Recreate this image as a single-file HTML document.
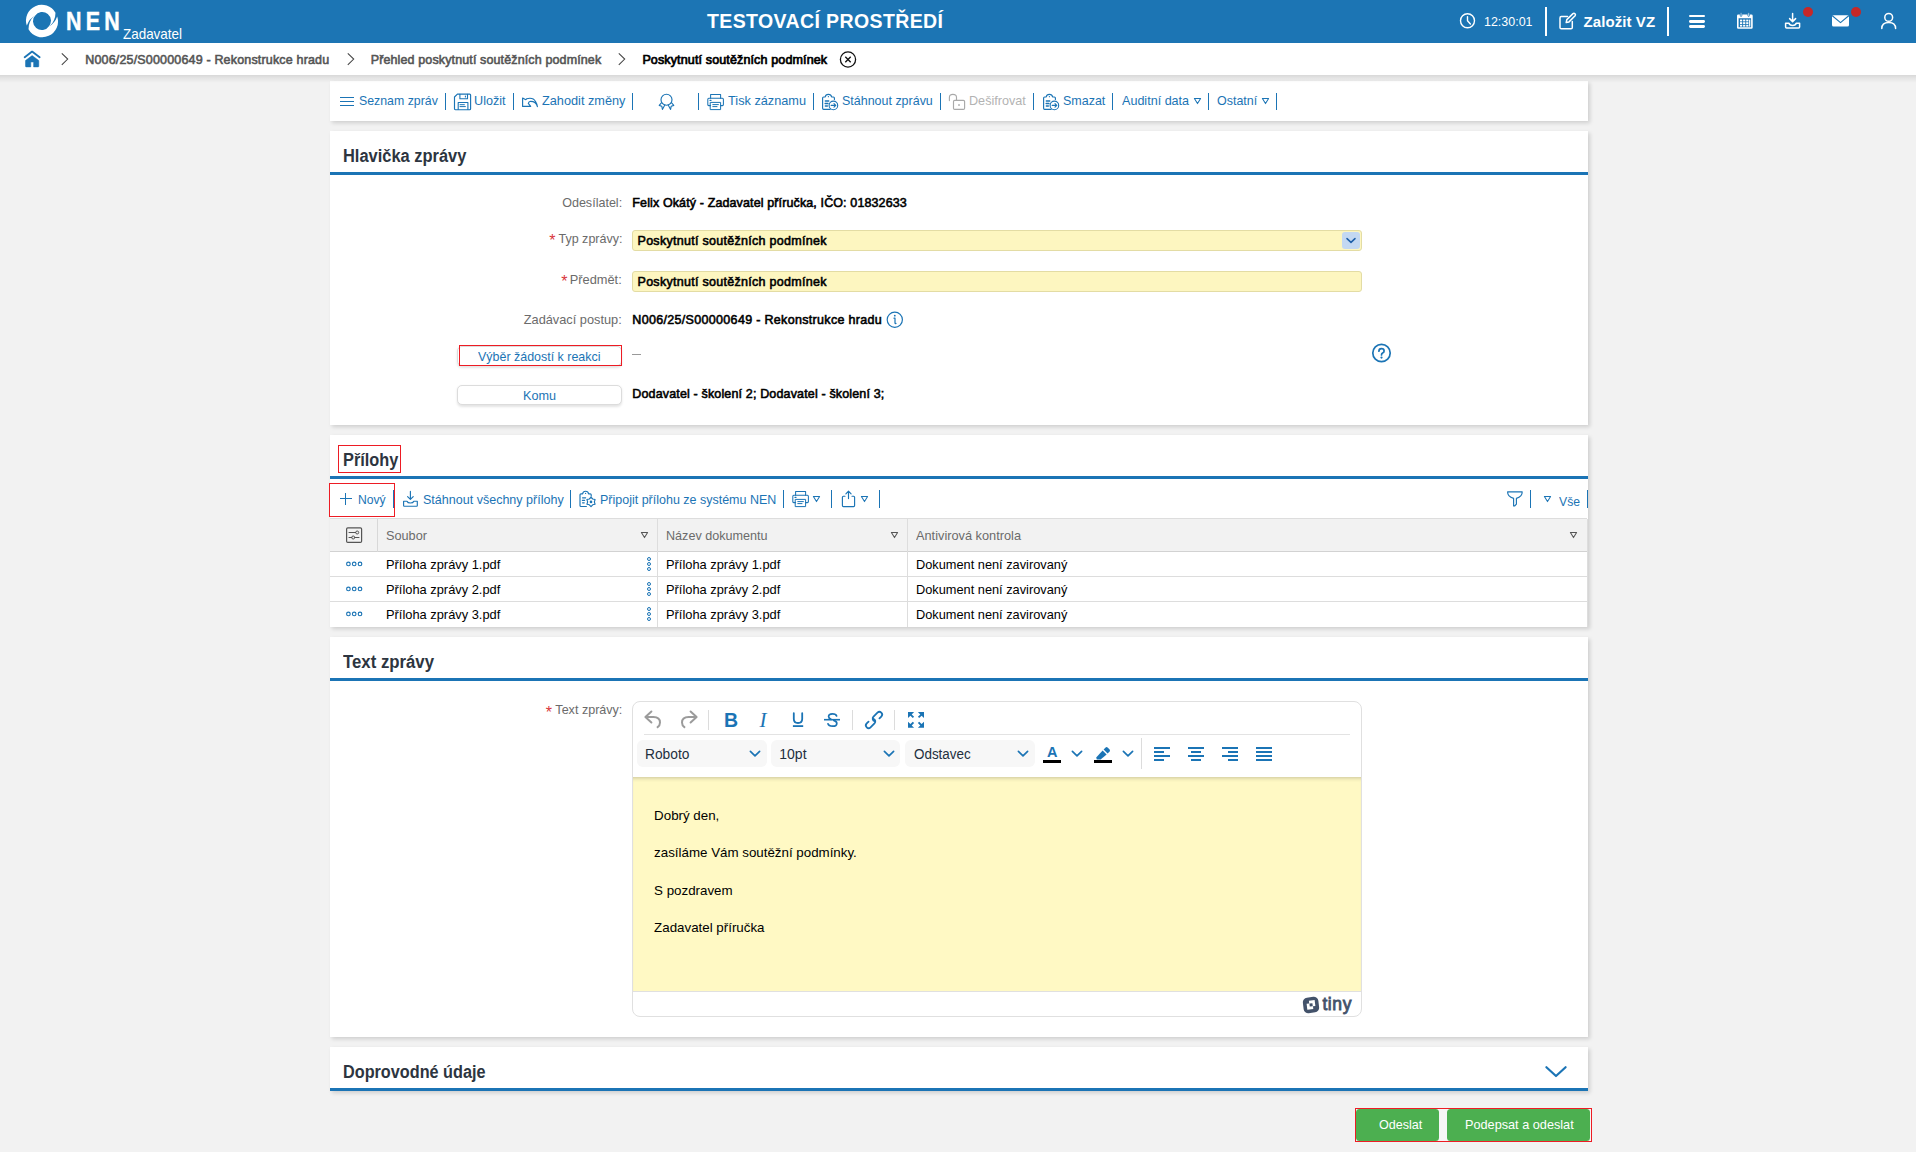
<!DOCTYPE html>
<html lang="cs"><head><meta charset="utf-8"><title>NEN - Poskytnutí soutěžních podmínek</title>
<style>
html,body{margin:0;padding:0}
body{width:1916px;height:1152px;overflow:hidden;background:#f2f2f2;position:relative;font-family:"Liberation Sans",sans-serif;}
.a{position:absolute;box-sizing:border-box}
.t{position:absolute;white-space:nowrap;display:block}
.panel{background:#fff;box-shadow:1.5px 1.5px 4px rgba(0,0,0,.15)}
</style></head><body>
<div class="a" style="left:0px;top:0px;width:1916px;height:43px;background:#1c75b4"></div>
<span class="t" style="left:65.8px;top:6.4px;height:30px;line-height:30px;font-size:25.5px;font-weight:700;color:#fff;letter-spacing:4.985px;transform:scaleX(.84);transform-origin:0 50%;-webkit-text-stroke:.45px #fff;">NEN</span>
<span class="t" style="left:123.0px;top:23.8px;height:20px;line-height:20px;font-size:14.5px;font-weight:400;color:#fff;transform:scaleX(0.9265);transform-origin:0 50%;">Zadavatel</span>
<span class="t" style="left:707.0px;top:8.8px;height:25px;line-height:25px;font-size:19.5px;font-weight:700;color:#fff;letter-spacing:0.390px;">TESTOVACÍ PROSTŘEDÍ</span>
<span class="t" style="left:1484.0px;top:12.0px;height:19px;line-height:19px;font-size:13px;font-weight:400;color:#fff;transform:scaleX(0.9584);transform-origin:0 50%;">12:30:01</span>
<div class="a" style="left:1545px;top:7px;width:2px;height:29px;background:#fff"></div>
<span class="t" style="left:1583.6px;top:11.0px;height:21px;line-height:21px;font-size:15px;font-weight:700;color:#fff;letter-spacing:0.074px;">Založit VZ</span>
<div class="a" style="left:1667px;top:7px;width:2px;height:29px;background:#fff"></div>
<div class="a" style="left:0px;top:43px;width:1916px;height:32px;background:#fff"></div>
<span class="t" style="left:85.2px;top:51.2px;height:18px;line-height:18px;font-size:12.5px;font-weight:400;color:#555;letter-spacing:0.171px;-webkit-text-stroke:0.57px #555;">N006/25/S00000649 - Rekonstrukce hradu</span>
<span class="t" style="left:370.7px;top:51.2px;height:18px;line-height:18px;font-size:12.5px;font-weight:400;color:#555;letter-spacing:0.126px;-webkit-text-stroke:0.57px #555;">Přehled poskytnutí soutěžních podmínek</span>
<span class="t" style="left:642.4px;top:51.2px;height:18px;line-height:18px;font-size:12.5px;font-weight:400;color:#000;letter-spacing:0.139px;-webkit-text-stroke:0.73px #000;">Poskytnutí soutěžních podmínek</span>
<div class="a panel" style="left:330px;top:81px;width:1258px;height:40px;"></div>
<span class="t" style="left:359.0px;top:90.8px;height:19px;line-height:19px;font-size:13px;font-weight:400;color:#1b74b5;transform:scaleX(0.9484);transform-origin:0 50%;">Seznam zpráv</span>
<div class="a" style="left:445px;top:93px;width:1.4px;height:17px;background:#1b74b5"></div>
<span class="t" style="left:474.4px;top:90.8px;height:19px;line-height:19px;font-size:13px;font-weight:400;color:#1b74b5;transform:scaleX(0.9721);transform-origin:0 50%;">Uložit</span>
<div class="a" style="left:513px;top:93px;width:1.4px;height:17px;background:#1b74b5"></div>
<span class="t" style="left:541.8px;top:90.8px;height:19px;line-height:19px;font-size:13px;font-weight:400;color:#1b74b5;transform:scaleX(0.9782);transform-origin:0 50%;">Zahodit změny</span>
<div class="a" style="left:632px;top:93px;width:1.4px;height:17px;background:#1b74b5"></div>
<div class="a" style="left:698px;top:93px;width:1.4px;height:17px;background:#1b74b5"></div>
<span class="t" style="left:727.9px;top:90.8px;height:19px;line-height:19px;font-size:13px;font-weight:400;color:#1b74b5;transform:scaleX(0.9786);transform-origin:0 50%;">Tisk záznamu</span>
<div class="a" style="left:813px;top:93px;width:1.4px;height:17px;background:#1b74b5"></div>
<span class="t" style="left:842.0px;top:90.8px;height:19px;line-height:19px;font-size:13px;font-weight:400;color:#1b74b5;transform:scaleX(0.9591);transform-origin:0 50%;">Stáhnout zprávu</span>
<div class="a" style="left:940px;top:93px;width:1.4px;height:17px;background:#1b74b5"></div>
<span class="t" style="left:969.4px;top:90.8px;height:19px;line-height:19px;font-size:13px;font-weight:400;color:#b3b3b3;transform:scaleX(0.9706);transform-origin:0 50%;">Dešifrovat</span>
<div class="a" style="left:1033px;top:93px;width:1.4px;height:17px;background:#1b74b5"></div>
<span class="t" style="left:1062.7px;top:90.8px;height:19px;line-height:19px;font-size:13px;font-weight:400;color:#1b74b5;transform:scaleX(0.9598);transform-origin:0 50%;">Smazat</span>
<div class="a" style="left:1112px;top:93px;width:1.4px;height:17px;background:#1b74b5"></div>
<span class="t" style="left:1121.9px;top:90.8px;height:19px;line-height:19px;font-size:13px;font-weight:400;color:#1b74b5;transform:scaleX(0.9670);transform-origin:0 50%;">Auditní data</span>
<div class="a" style="left:1208px;top:93px;width:1.4px;height:17px;background:#1b74b5"></div>
<span class="t" style="left:1217.4px;top:90.8px;height:19px;line-height:19px;font-size:13px;font-weight:400;color:#1b74b5;transform:scaleX(0.9593);transform-origin:0 50%;">Ostatní</span>
<div class="a" style="left:1276px;top:93px;width:1.4px;height:17px;background:#1b74b5"></div>
<div class="a panel" style="left:330px;top:131px;width:1258px;height:294px;"></div>
<div class="a" style="left:330px;top:172px;width:1258px;height:3px;background:#1b74b5"></div>
<span class="t" style="left:342.5px;top:144.0px;height:24px;line-height:24px;font-size:18px;font-weight:700;color:#2d3540;transform:scaleX(0.9135);transform-origin:0 50%;">Hlavička zprávy</span>
<span class="t" style="right:1294.0px;top:193.0px;height:19px;line-height:19px;font-size:13px;font-weight:400;color:#6b6b6b;transform:scaleX(0.9655);transform-origin:100% 50%;">Odesílatel:</span>
<span class="t" style="left:632.3px;top:193.9px;height:18px;line-height:18px;font-size:12.5px;font-weight:400;color:#000;letter-spacing:0.122px;-webkit-text-stroke:0.57px #000;">Felix Okátý - Zadavatel příručka, IČO: 01832633</span>
<span class="t" style="right:1294.0px;top:228.5px;height:19px;line-height:19px;font-size:13px;font-weight:400;color:#6b6b6b;transform:scaleX(0.9629);transform-origin:100% 50%;">Typ zprávy:</span>
<span class="t" style="left:549.3px;top:230.2px;height:22px;line-height:22px;font-size:16px;font-weight:400;color:#d9363b;">*</span>
<div class="a" style="left:632px;top:230px;width:730px;height:21px;background:#fdf6c0;border:1px solid #e3dca4;border-radius:3px"></div>
<span class="t" style="left:637.5px;top:231.9px;height:18px;line-height:18px;font-size:12.5px;font-weight:400;color:#000;letter-spacing:0.288px;-webkit-text-stroke:0.57px #000;">Poskytnutí soutěžních podmínek</span>
<div class="a" style="left:1342px;top:232px;width:18px;height:17px;background:#c3d8f2;border-radius:3px"></div>
<div class="a" style="left:632px;top:271px;width:730px;height:21px;background:#fdf6c0;border:1px solid #e3dca4;border-radius:3px"></div>
<span class="t" style="right:1294.0px;top:269.5px;height:19px;line-height:19px;font-size:13px;font-weight:400;color:#6b6b6b;transform:scaleX(0.9859);transform-origin:100% 50%;">Předmět:</span>
<span class="t" style="left:561.3px;top:271.2px;height:22px;line-height:22px;font-size:16px;font-weight:400;color:#d9363b;">*</span>
<span class="t" style="left:637.5px;top:272.9px;height:18px;line-height:18px;font-size:12.5px;font-weight:400;color:#000;letter-spacing:0.288px;-webkit-text-stroke:0.57px #000;">Poskytnutí soutěžních podmínek</span>
<span class="t" style="right:1294.0px;top:309.5px;height:19px;line-height:19px;font-size:13px;font-weight:400;color:#6b6b6b;transform:scaleX(0.9827);transform-origin:100% 50%;">Zadávací postup:</span>
<span class="t" style="left:632.3px;top:311.2px;height:18px;line-height:18px;font-size:12.5px;font-weight:400;color:#000;letter-spacing:0.320px;-webkit-text-stroke:0.57px #000;">N006/25/S00000649 - Rekonstrukce hradu</span>
<div class="a" style="left:457.3px;top:346px;width:164.4px;height:19.6px;border:1px solid #dcdcdc;border-radius:5px;background:#fff;box-shadow:0 1.5px 2.5px rgba(0,0,0,.11)"></div>
<div class="a" style="left:459px;top:345px;width:163px;height:21px;border:1.2px solid #ed1c24"></div>
<span class="t" style="left:478.3px;top:347.0px;height:19px;line-height:19px;font-size:13px;font-weight:400;color:#1b74b5;transform:scaleX(0.9579);transform-origin:0 50%;">Výběr žádostí k reakci</span>
<div class="a" style="left:632px;top:354px;width:9px;height:1px;background:#999"></div>
<div class="a" style="left:457.3px;top:385.2px;width:164.4px;height:19.6px;border:1px solid #dcdcdc;border-radius:5px;background:#fff;box-shadow:0 1.5px 2.5px rgba(0,0,0,.11)"></div>
<span class="t" style="left:523.0px;top:386.0px;height:19px;line-height:19px;font-size:13px;font-weight:400;color:#1b74b5;transform:scaleX(0.9717);transform-origin:0 50%;">Komu</span>
<span class="t" style="left:632.3px;top:384.8px;height:18px;line-height:18px;font-size:12.5px;font-weight:400;color:#000;letter-spacing:0.153px;-webkit-text-stroke:0.57px #000;">Dodavatel - školení 2; Dodavatel - školení 3;</span>
<div class="a panel" style="left:330px;top:435px;width:1258px;height:191.6px;"></div>
<div class="a" style="left:330px;top:476px;width:1258px;height:3px;background:#1b74b5"></div>
<span class="t" style="left:342.5px;top:448.0px;height:24px;line-height:24px;font-size:18px;font-weight:700;color:#2d3540;transform:scaleX(0.9064);transform-origin:0 50%;">Přílohy</span>
<div class="a" style="left:337.5px;top:445px;width:63.5px;height:28px;border:1.2px solid #ed1c24"></div>
<div class="a" style="left:329px;top:483.4px;width:65.8px;height:33.6px;border:1.2px solid #ed1c24"></div>
<span class="t" style="left:358.4px;top:490.0px;height:19px;line-height:19px;font-size:13px;font-weight:400;color:#1b74b5;transform:scaleX(0.9352);transform-origin:0 50%;">Nový</span>
<div class="a" style="left:393px;top:490px;width:1.4px;height:17.8px;background:#1b74b5"></div>
<span class="t" style="left:422.5px;top:490.0px;height:19px;line-height:19px;font-size:13px;font-weight:400;color:#1b74b5;transform:scaleX(0.9638);transform-origin:0 50%;">Stáhnout všechny přílohy</span>
<div class="a" style="left:570px;top:490px;width:1.4px;height:17.8px;background:#1b74b5"></div>
<span class="t" style="left:599.6px;top:490.0px;height:19px;line-height:19px;font-size:13px;font-weight:400;color:#1b74b5;transform:scaleX(0.9607);transform-origin:0 50%;">Připojit přílohu ze systému NEN</span>
<div class="a" style="left:783px;top:490px;width:1.4px;height:17.8px;background:#1b74b5"></div>
<div class="a" style="left:831px;top:490px;width:1.4px;height:17.8px;background:#1b74b5"></div>
<div class="a" style="left:879px;top:490px;width:1.4px;height:17.8px;background:#1b74b5"></div>
<div class="a" style="left:1530px;top:490px;width:1.4px;height:17.8px;background:#1b74b5"></div>
<span class="t" style="left:1558.9px;top:491.5px;height:19px;line-height:19px;font-size:13px;font-weight:400;color:#1b74b5;transform:scaleX(0.9375);transform-origin:0 50%;">Vše</span>
<div class="a" style="left:1587px;top:490px;width:1.4px;height:17.8px;background:#1b74b5"></div>
<div class="a" style="left:330px;top:518px;width:1257px;height:34px;background:#f2f2f2;border-top:1px solid #ddd;border-bottom:1px solid #d2d2d2"></div>
<div class="a" style="left:377px;top:519px;width:1px;height:33px;background:#d8d8d8"></div>
<div class="a" style="left:657px;top:519px;width:1px;height:107.5px;background:#ddd"></div>
<div class="a" style="left:907px;top:519px;width:1px;height:107.5px;background:#ddd"></div>
<span class="t" style="left:386.1px;top:526.0px;height:19px;line-height:19px;font-size:13px;font-weight:400;color:#6b6b6b;transform:scaleX(0.9780);transform-origin:0 50%;">Soubor</span>
<span class="t" style="left:666.4px;top:526.0px;height:19px;line-height:19px;font-size:13px;font-weight:400;color:#6b6b6b;transform:scaleX(0.9687);transform-origin:0 50%;">Název dokumentu</span>
<span class="t" style="left:916.2px;top:526.0px;height:19px;line-height:19px;font-size:13px;font-weight:400;color:#6b6b6b;transform:scaleX(0.9819);transform-origin:0 50%;">Antivirová kontrola</span>
<span class="t" style="left:386.1px;top:555.0px;height:19px;line-height:19px;font-size:13px;font-weight:400;color:#000;transform:scaleX(0.9886);transform-origin:0 50%;">Příloha zprávy 1.pdf</span>
<span class="t" style="left:666.4px;top:555.0px;height:19px;line-height:19px;font-size:13px;font-weight:400;color:#000;transform:scaleX(0.9886);transform-origin:0 50%;">Příloha zprávy 1.pdf</span>
<span class="t" style="left:916.2px;top:555.0px;height:19px;line-height:19px;font-size:13px;font-weight:400;color:#000;transform:scaleX(0.9830);transform-origin:0 50%;">Dokument není zavirovaný</span>
<div class="a" style="left:330px;top:576px;width:1257px;height:1px;background:#ddd"></div>
<span class="t" style="left:386.1px;top:580.0px;height:19px;line-height:19px;font-size:13px;font-weight:400;color:#000;transform:scaleX(0.9886);transform-origin:0 50%;">Příloha zprávy 2.pdf</span>
<span class="t" style="left:666.4px;top:580.0px;height:19px;line-height:19px;font-size:13px;font-weight:400;color:#000;transform:scaleX(0.9886);transform-origin:0 50%;">Příloha zprávy 2.pdf</span>
<span class="t" style="left:916.2px;top:580.0px;height:19px;line-height:19px;font-size:13px;font-weight:400;color:#000;transform:scaleX(0.9830);transform-origin:0 50%;">Dokument není zavirovaný</span>
<div class="a" style="left:330px;top:601px;width:1257px;height:1px;background:#ddd"></div>
<span class="t" style="left:386.1px;top:605.0px;height:19px;line-height:19px;font-size:13px;font-weight:400;color:#000;transform:scaleX(0.9886);transform-origin:0 50%;">Příloha zprávy 3.pdf</span>
<span class="t" style="left:666.4px;top:605.0px;height:19px;line-height:19px;font-size:13px;font-weight:400;color:#000;transform:scaleX(0.9886);transform-origin:0 50%;">Příloha zprávy 3.pdf</span>
<span class="t" style="left:916.2px;top:605.0px;height:19px;line-height:19px;font-size:13px;font-weight:400;color:#000;transform:scaleX(0.9830);transform-origin:0 50%;">Dokument není zavirovaný</span>
<div class="a" style="left:1586.5px;top:519px;width:1px;height:107.5px;background:#ddd"></div>
<div class="a panel" style="left:330px;top:637px;width:1258px;height:400px;"></div>
<div class="a" style="left:330px;top:678px;width:1258px;height:3px;background:#1b74b5"></div>
<span class="t" style="left:342.5px;top:650.0px;height:24px;line-height:24px;font-size:18px;font-weight:700;color:#2d3540;transform:scaleX(0.9313);transform-origin:0 50%;">Text zprávy</span>
<span class="t" style="right:1294.0px;top:700.0px;height:19px;line-height:19px;font-size:13px;font-weight:400;color:#6b6b6b;transform:scaleX(0.9660);transform-origin:100% 50%;">Text zprávy:</span>
<span class="t" style="left:545.8px;top:701.7px;height:22px;line-height:22px;font-size:16px;font-weight:400;color:#d9363b;">*</span>
<div class="a" style="left:632px;top:701px;width:730px;height:315.5px;border:1px solid #e0e0e0;border-radius:8px;background:#fff;overflow:hidden"><div class="a" style="left:0;top:75px;width:728px;height:213.6px;background:#fff9c4;box-shadow:inset 0 4px 4px -3px rgba(0,0,0,.22)"></div><div class="a" style="left:0;top:288.6px;width:728px;height:1px;background:#e0e0e0"></div></div>
<div class="a" style="left:644px;top:734px;width:706px;height:1px;background:#e3e3e3"></div>
<div class="a" style="left:707.8px;top:710px;width:1px;height:19.6px;background:#dcdcdc"></div>
<div class="a" style="left:851.8px;top:710px;width:1px;height:19.6px;background:#dcdcdc"></div>
<div class="a" style="left:893.8px;top:710px;width:1px;height:19.6px;background:#dcdcdc"></div>
<div class="a" style="left:637.3px;top:740px;width:129.5px;height:26.5px;background:#f7f7f7;border-radius:6px"></div>
<span class="t" style="left:644.9px;top:744.0px;height:20px;line-height:20px;font-size:14px;font-weight:400;color:#222f3e;transform:scaleX(0.9835);transform-origin:0 50%;">Roboto</span>
<div class="a" style="left:770.9px;top:740px;width:129.5px;height:26.5px;background:#f7f7f7;border-radius:6px"></div>
<span class="t" style="left:779.2px;top:744.0px;height:20px;line-height:20px;font-size:14px;font-weight:400;color:#222f3e;letter-spacing:0.051px;">10pt</span>
<div class="a" style="left:905.2px;top:740px;width:129.5px;height:26.5px;background:#f7f7f7;border-radius:6px"></div>
<span class="t" style="left:913.5px;top:744.0px;height:20px;line-height:20px;font-size:14px;font-weight:400;color:#222f3e;transform:scaleX(0.9588);transform-origin:0 50%;">Odstavec</span>
<div class="a" style="left:1140.5px;top:738px;width:1px;height:31px;background:#dcdcdc"></div>
<span class="t" style="left:654.1px;top:805.8px;height:19px;line-height:19px;font-size:13.33px;font-weight:400;color:#000;">Dobrý den,</span>
<span class="t" style="left:654.1px;top:843.3px;height:19px;line-height:19px;font-size:13.33px;font-weight:400;color:#000;">zasíláme Vám soutěžní podmínky.</span>
<span class="t" style="left:654.1px;top:880.8px;height:19px;line-height:19px;font-size:13.33px;font-weight:400;color:#000;">S pozdravem</span>
<span class="t" style="left:654.1px;top:917.8px;height:19px;line-height:19px;font-size:13.33px;font-weight:400;color:#000;">Zadavatel příručka</span>
<span class="t" style="left:1322.4px;top:993.0px;height:23px;line-height:23px;font-size:17.5px;font-weight:400;color:#43526a;letter-spacing:0.589px;-webkit-text-stroke:0.80px #43526a;">tiny</span>
<div class="a panel" style="left:330px;top:1047px;width:1258px;height:44px;"></div>
<div class="a" style="left:330px;top:1088px;width:1258px;height:3px;background:#1b74b5"></div>
<span class="t" style="left:342.5px;top:1060.0px;height:24px;line-height:24px;font-size:18px;font-weight:700;color:#2d3540;transform:scaleX(0.9018);transform-origin:0 50%;">Doprovodné údaje</span>
<div class="a" style="left:1355px;top:1108px;width:236.6px;height:34px;border:1.2px solid #ed1c24;background:#f6f6f6"></div>
<div class="a" style="left:1356.2px;top:1109.1px;width:82.5px;height:31.6px;background:#4caf50;border-radius:3.5px"></div>
<div class="a" style="left:1447.1px;top:1109.1px;width:143.2px;height:31.6px;background:#4caf50;border-radius:3.5px"></div>
<span class="t" style="left:1379.4px;top:1115.0px;height:19px;line-height:19px;font-size:13px;font-weight:400;color:#fff;transform:scaleX(0.9665);transform-origin:0 50%;">Odeslat</span>
<span class="t" style="left:1464.6px;top:1115.0px;height:19px;line-height:19px;font-size:13px;font-weight:400;color:#fff;transform:scaleX(0.9766);transform-origin:0 50%;">Podepsat a odeslat</span>
<div class="a" style="left:0px;top:75px;width:1916px;height:8px;background:linear-gradient(rgba(0,0,0,.105),rgba(0,0,0,.05) 45%,rgba(0,0,0,0));z-index:9"></div>
<svg class="a" style="left:23px;top:2px;" width="38" height="38" viewBox="-20 -20 40 40" fill="none"><path d="M -16 4.85 A 16.6 16.6 0 0 1 14.2 -8.6 L 13.8 -4.4 Q 12 3 6.8 6.25 A 9.25 9.25 0 1 0 -7.4 -5.5 Q -13.3 -2.6 -16 4.85 Z" fill="#fff"/><path d="M -16 4.85 A 16.6 16.6 0 0 1 14.2 -8.6 L 13.8 -4.4 Q 12 3 6.8 6.25 A 9.25 9.25 0 1 0 -7.4 -5.5 Q -13.3 -2.6 -16 4.85 Z" fill="#fff" transform="rotate(180)"/></svg>
<svg class="a" style="left:1458px;top:11px;" width="20" height="20" viewBox="0 0 20 20" fill="none"><circle cx="9.5" cy="9.7" r="7" stroke="#fff" stroke-width="1.4"/><path d="M9.5 5.6 V9.8 L12.4 12.9" stroke="#fff" stroke-width="1.4" fill="none" stroke-linecap="round" stroke-linejoin="round" /></svg>
<svg class="a" style="left:1557px;top:10px;" width="22" height="22" viewBox="0 0 22 22" fill="none"><path d="M10.5 6.6 H4.3 Q3 6.6 3 7.9 V17.4 Q3 18.7 4.3 18.7 H14 Q15.3 18.7 15.3 17.4 V11.6" stroke="#fff" stroke-width="1.5" fill="none" stroke-linecap="round" stroke-linejoin="round" /><path d="M9.2 12.6 L9.8 9.6 L16 3.6 Q17 2.8 18 3.7 Q18.9 4.7 18.1 5.7 L12 11.9 Z" stroke="#fff" stroke-width="1.5" fill="none" stroke-linecap="round" stroke-linejoin="round" /></svg>
<div class="a" style="left:1689.2px;top:14.6px;width:16px;height:2.8px;background:#fff;border-radius:1.4px"></div>
<div class="a" style="left:1689.2px;top:19.8px;width:16px;height:2.8px;background:#fff;border-radius:1.4px"></div>
<div class="a" style="left:1689.2px;top:25px;width:16px;height:2.8px;background:#fff;border-radius:1.4px"></div>
<svg class="a" style="left:1736px;top:12px;" width="18" height="18" viewBox="0 0 18 18" fill="none"><path fill-rule="evenodd" fill="#fff" d="M2.2 2.6 H15.5 Q16.7 2.6 16.7 3.8 V15.6 Q16.7 16.8 15.5 16.8 H2.2 Q1 16.8 1 15.6 V3.8 Q1 2.6 2.2 2.6 Z M2.6 6.2 V15.2 H15.1 V6.2 Z"/>
<rect x="4.3" y="0.8" width="1.5" height="3.6" rx=".7" fill="#fff" stroke="#1c75b4" stroke-width=".8"/><rect x="11.9" y="0.8" width="1.5" height="3.6" rx=".7" fill="#fff" stroke="#1c75b4" stroke-width=".8"/>
<g fill="#fff"><rect x="4" y="7.6" width="2.2" height="1.8"/><rect x="7.1" y="7.6" width="2.2" height="1.8"/><rect x="10.2" y="7.6" width="2.2" height="1.8"/><rect x="4" y="10.2" width="2.2" height="1.8"/><rect x="7.1" y="10.2" width="2.2" height="1.8"/><rect x="10.2" y="10.2" width="2.2" height="1.8"/><rect x="4" y="12.8" width="2.2" height="1.8"/><rect x="7.1" y="12.8" width="2.2" height="1.8"/><rect x="10.2" y="12.8" width="2.2" height="1.8"/><rect x="13.1" y="7.6" width="1.2" height="7" /></g></svg>
<svg class="a" style="left:1783px;top:11px;" width="20" height="20" viewBox="0 0 20 20" fill="none"><path d="M9.6 2.6 V10.4 M6.6 7.6 L9.6 10.6 L12.6 7.6" stroke="#fff" stroke-width="1.5" fill="none" stroke-linecap="round" stroke-linejoin="round" /><path d="M2.6 12.2 H6 Q6.6 14.4 9.6 14.4 Q12.6 14.4 13.2 12.2 H16.6 V16 Q16.6 17 15.6 17 H3.6 Q2.6 17 2.6 16 Z" stroke="#fff" stroke-width="1.5" fill="none" stroke-linecap="round" stroke-linejoin="round" /></svg>
<div class="a" style="left:1803px;top:7px;width:10px;height:10px;background:#c62828;border-radius:50%"></div>
<svg class="a" style="left:1830px;top:13px;" width="22" height="16" viewBox="0 0 22 16" fill="none"><rect x="2" y="2.2" width="17" height="11.4" rx="1.6" fill="#fff"/><path d="M2.6 3 L10.5 9.6 L18.4 3" stroke="#1c75b4" stroke-width="1.1" fill="none" stroke-linecap="round" stroke-linejoin="round" /></svg>
<div class="a" style="left:1851px;top:7px;width:10px;height:10px;background:#c62828;border-radius:50%"></div>
<svg class="a" style="left:1879px;top:11px;" width="20" height="20" viewBox="0 0 20 20" fill="none"><circle cx="9.7" cy="6.4" r="3.9" stroke="#fff" stroke-width="1.5"/><path d="M2.8 17.6 Q2.8 11.6 9.7 11.6 Q16.6 11.6 16.6 17.6" stroke="#fff" stroke-width="1.5" fill="none" stroke-linecap="round" stroke-linejoin="round" /></svg>
<svg class="a" style="left:23px;top:50px;" width="18" height="18" viewBox="0 0 18 18" fill="none"><path d="M1.7 7.2 L9.1 1.6 L16.6 7.2" stroke="#1b74b5" stroke-width="1.9" stroke-linecap="round" stroke-linejoin="round" fill="none"/><path d="M9.1 5.6 L15.8 10.5 V16.2 Q15.8 16.9 15.1 16.9 H10.6 V12 H7.8 V16.9 H3.2 Q2.5 16.9 2.5 16.2 V10.5 Z" fill="#1b74b5" stroke="#1b74b5" stroke-width=".5" stroke-linejoin="round"/></svg>
<svg class="a" style="left:61.2px;top:52px;" width="9" height="14" viewBox="0 0 9 14" fill="none"><path d="M.8 1.3 L6.7 7.1 L.8 12.8" stroke="#444" stroke-width="1.05" fill="none"/></svg>
<svg class="a" style="left:347px;top:52px;" width="9" height="14" viewBox="0 0 9 14" fill="none"><path d="M.8 1.3 L6.7 7.1 L.8 12.8" stroke="#444" stroke-width="1.05" fill="none"/></svg>
<svg class="a" style="left:618.2px;top:52px;" width="9" height="14" viewBox="0 0 9 14" fill="none"><path d="M.8 1.3 L6.7 7.1 L.8 12.8" stroke="#444" stroke-width="1.05" fill="none"/></svg>
<svg class="a" style="left:838px;top:50px;" width="20" height="20" viewBox="0 0 20 20" fill="none"><circle cx="10" cy="9.5" r="7.6" stroke="#111" stroke-width="1.3"/><path d="M7.3 6.8 L12.7 12.2 M12.7 6.8 L7.3 12.2" stroke="#111" stroke-width="1.35"/></svg>
<div class="a" style="left:340px;top:97px;width:14.2px;height:1.1px;background:#1b74b5"></div>
<div class="a" style="left:340px;top:101px;width:14.2px;height:1.1px;background:#1b74b5"></div>
<div class="a" style="left:340px;top:105px;width:14.2px;height:1.1px;background:#1b74b5"></div>
<svg class="a" style="left:453px;top:92px;" width="20" height="20" viewBox="0 0 20 20" fill="none"><path d="M4.4 2.1 H16.6 Q17.6 2.1 17.6 3.1 V16.7 Q17.6 17.7 16.6 17.7 H2.5 Q1.5 17.7 1.5 16.7 V5 Z" stroke="#1b74b5" stroke-width="1.15" fill="none" stroke-linecap="round" stroke-linejoin="round" /><path d="M6.9 2.3 V6.8 H14.5 V2.3 M12.4 4 V5 M5.2 17.5 V10.5 H14.9 V17.5" stroke="#1b74b5" stroke-width="1.1" fill="none" stroke-linecap="round" stroke-linejoin="round" /><path d="M7 12.7 H11.4 M7 14.6 H12.4" stroke="#1b74b5" stroke-width="1" fill="none" stroke-linecap="round" stroke-linejoin="round" /></svg>
<svg class="a" style="left:516px;top:88px;" width="30" height="26" viewBox="0 0 30 26" fill="none"><path d="M6.6 10 L9.4 11.6 Q10.2 11.6 10.6 10.7 C13.5 10 17.5 9.6 19.4 13.4 Q21 16 21.4 18.6 C20.6 15 18.6 13.3 14.6 13.3 Q12.8 13.6 12.3 15.3 L14.7 18.4 H6.6 Z" stroke="#1b74b5" stroke-width="1.15" fill="none" stroke-linecap="round" stroke-linejoin="round" /></svg>
<svg class="a" style="left:656px;top:90px;" width="22" height="22" viewBox="0 0 22 22" fill="none"><circle cx="10.5" cy="9.7" r="5.5" stroke="#1b74b5" stroke-width="1.15"/><path d="M5.6 12.6 L3.2 15.4 L5.8 16.2 L6.4 19.4 L8.8 14.9 M15.4 12.6 L17.8 15.4 L15.2 16.2 L14.6 19.4 L12.2 14.9" stroke="#1b74b5" stroke-width="1.1" fill="none" stroke-linecap="round" stroke-linejoin="round" /></svg>
<svg class="a" style="left:706px;top:92px;" width="20" height="20" viewBox="0 0 20 20" fill="none"><path d="M4.6 6.2 V2.4 H14.6 V6.2" stroke="#1b74b5" stroke-width="1.05" fill="none" stroke-linecap="round" stroke-linejoin="round" /><path d="M4.6 13.6 H2.8 Q1.8 13.6 1.8 12.6 V7.4 Q1.8 6.3 2.8 6.3 H16.4 Q17.4 6.3 17.4 7.4 V12.6 Q17.4 13.6 16.4 13.6 H14.6" stroke="#1b74b5" stroke-width="1.05" fill="none" stroke-linecap="round" stroke-linejoin="round" /><path d="M4.6 10.4 H14.6 V17.6 H4.6 Z M6.8 12.6 H12.4 M6.8 14.6 H11" stroke="#1b74b5" stroke-width="1" fill="none" stroke-linecap="round" stroke-linejoin="round" /><path d="M4 8.4 H5" stroke="#1b74b5" stroke-width="1.1" fill="none" stroke-linecap="round" stroke-linejoin="round" /></svg>
<svg class="a" style="left:820.8px;top:92px;" width="22" height="22" viewBox="0 0 22 22" fill="none"><path d="M9.2 17.3 H2.6 Q1.6 17.3 1.6 16.3 V6 Q1.6 5 2.6 5 H4.2 Q4.6 2.4 7.4 2.4 Q10.2 2.4 10.6 5 H12.4 Q13.4 5 13.4 6 V7.4" stroke="#1b74b5" stroke-width="1.15" fill="none" stroke-linecap="round" stroke-linejoin="round" /><path d="M7.4 4.5 V4.7" stroke="#1b74b5" stroke-width="1.2" fill="none" stroke-linecap="round" stroke-linejoin="round" /><path d="M4.3 9 H7.8 M4.1 11.5 H7 M4.3 14 H6.4" stroke="#1b74b5" stroke-width="1.3" fill="none" stroke-linecap="round" stroke-linejoin="round" /><circle cx="12.4" cy="13.4" r="4.3" stroke="#1b74b5" stroke-width="1.15"/><path d="M10.2 13.4 H14.6 M13 11.6 L14.8 13.4 L13 15.2" stroke="#1b74b5" stroke-width="1.15" fill="none" stroke-linecap="round" stroke-linejoin="round" /></svg>
<svg class="a" style="left:1041.8px;top:92px;" width="22" height="22" viewBox="0 0 22 22" fill="none"><path d="M9.2 17.3 H2.6 Q1.6 17.3 1.6 16.3 V6 Q1.6 5 2.6 5 H4.2 Q4.6 2.4 7.4 2.4 Q10.2 2.4 10.6 5 H12.4 Q13.4 5 13.4 6 V7.4" stroke="#1b74b5" stroke-width="1.15" fill="none" stroke-linecap="round" stroke-linejoin="round" /><path d="M7.4 4.5 V4.7" stroke="#1b74b5" stroke-width="1.2" fill="none" stroke-linecap="round" stroke-linejoin="round" /><path d="M4.3 9 H7.8 M4.1 11.5 H7 M4.3 14 H6.4" stroke="#1b74b5" stroke-width="1.3" fill="none" stroke-linecap="round" stroke-linejoin="round" /><circle cx="12.4" cy="13.4" r="4.3" stroke="#1b74b5" stroke-width="1.15"/><path d="M10.2 13.4 H14.6 M13 11.6 L14.8 13.4 L13 15.2" stroke="#1b74b5" stroke-width="1.15" fill="none" stroke-linecap="round" stroke-linejoin="round" /></svg>
<svg class="a" style="left:946px;top:90px;" width="22" height="22" viewBox="0 0 22 22" fill="none"><path d="M3.4 10.6 V7.4 Q3.4 4.4 6.9 4.4 Q10.5 4.4 10.5 7.4 V10.3" stroke="#a9a9a9" stroke-width="1.15" fill="none" stroke-linecap="round" stroke-linejoin="round" /><rect x="7.5" y="10.3" width="11.1" height="9.1" rx="1.2" stroke="#a9a9a9" stroke-width="1.15"/><path d="M13 14.6 V15.4" stroke="#a9a9a9" stroke-width="1.4" fill="none" stroke-linecap="round" stroke-linejoin="round" /></svg>
<svg class="a" style="left:1192.9px;top:97px;" width="9" height="8.2" viewBox="0 0 9 8.2" fill="none"><path d="M1.4 1.5 H7.6 L4.5 6.6 Z" stroke="#1b74b5" stroke-width="1.05" stroke-linejoin="round" fill="none"/></svg>
<svg class="a" style="left:1261.2px;top:97px;" width="9" height="8.2" viewBox="0 0 9 8.2" fill="none"><path d="M1.4 1.5 H7.6 L4.5 6.6 Z" stroke="#1b74b5" stroke-width="1.05" stroke-linejoin="round" fill="none"/></svg>
<svg class="a" style="left:885px;top:310px;" width="20" height="20" viewBox="0 0 20 20" fill="none"><circle cx="9.8" cy="9.7" r="7.6" stroke="#1b74b5" stroke-width="1.2"/><path d="M9 8.2 H10 V13 Q10 13.8 11 13.4" stroke="#1b74b5" stroke-width="1.2" fill="none" stroke-linecap="round" stroke-linejoin="round" /><circle cx="9.8" cy="5.7" r=".9" fill="#1b74b5"/></svg>
<svg class="a" style="left:1370px;top:342px;" width="24" height="24" viewBox="0 0 24 24" fill="none"><circle cx="11.5" cy="11" r="8.7" stroke="#1b74b5" stroke-width="1.7"/><path d="M8.9 9.2 Q8.9 6.6 11.5 6.6 Q14.1 6.6 14.1 8.9 Q14.1 10.3 12.6 11 Q11.5 11.6 11.5 12.9" stroke="#1b74b5" stroke-width="1.7" fill="none" stroke-linecap="round" stroke-linejoin="round" /><circle cx="11.5" cy="15.6" r="1.1" fill="#1b74b5"/></svg>
<svg class="a" style="left:1342px;top:232px;" width="18" height="17" viewBox="0 0 18 17" fill="none"><path d="M5 6.6 L9 10.4 L13 6.6" stroke="#1d5fa8" stroke-width="1.5" fill="none" stroke-linecap="round" stroke-linejoin="round" /></svg>
<div class="a" style="left:339.7px;top:498px;width:12.3px;height:1.1px;background:#1b74b5"></div>
<div class="a" style="left:345.3px;top:492.5px;width:1.1px;height:12.2px;background:#1b74b5"></div>
<svg class="a" style="left:401px;top:489px;" width="20" height="20" viewBox="0 0 20 20" fill="none"><path d="M9.4 2.4 V10.2 M6.6 7.6 L9.4 10.4 L12.2 7.6" stroke="#1b74b5" stroke-width="1.15" fill="none" stroke-linecap="round" stroke-linejoin="round" /><path d="M2.6 12.2 H6 Q6.6 14 9.4 14 Q12.2 14 12.8 12.2 H16.3 V16.6 Q16.3 17.2 15.7 17.2 H3.2 Q2.6 17.2 2.6 16.6 Z" stroke="#1b74b5" stroke-width="1.15" fill="none" stroke-linecap="round" stroke-linejoin="round" /></svg>
<svg class="a" style="left:578px;top:489px;" width="22" height="22" viewBox="0 0 22 22" fill="none"><path d="M8.4 17.5 H3 Q2 17.5 2 16.5 V5.8 Q2 4.8 3 4.8 H4.6 Q5 2.2 7.6 2.2 Q10.2 2.2 10.6 4.8 H12.2 Q13.2 4.8 13.2 5.8 V7.2" stroke="#1b74b5" stroke-width="1.15" fill="none" stroke-linecap="round" stroke-linejoin="round" /><path d="M7.6 4.3 V4.5" stroke="#1b74b5" stroke-width="1.2" fill="none" stroke-linecap="round" stroke-linejoin="round" /><path d="M4.6 8.8 H7.6 M4.4 11.3 H6.6 M4.6 13.8 H6.2" stroke="#1b74b5" stroke-width="1.3" fill="none" stroke-linecap="round" stroke-linejoin="round" /><g transform="translate(13 12.9)"><path d="M0.00 -4.70 L1.68 -2.90 L4.07 -2.35 L3.35 0.00 L4.07 2.35 L1.68 2.90 L0.00 4.70 L-1.67 2.90 L-4.07 2.35 L-3.35 0.00 L-4.07 -2.35 L-1.68 -2.90 Z" stroke="#1b74b5" stroke-width="1.15" fill="none" stroke-linecap="round" stroke-linejoin="round" /><circle r="1.3" fill="#1b74b5"/></g></svg>
<svg class="a" style="left:791px;top:489px;" width="20" height="20" viewBox="0 0 20 20" fill="none"><path d="M4.6 6.2 V2.4 H14.6 V6.2" stroke="#1b74b5" stroke-width="1.05" fill="none" stroke-linecap="round" stroke-linejoin="round" /><path d="M4.6 13.6 H2.8 Q1.8 13.6 1.8 12.6 V7.4 Q1.8 6.3 2.8 6.3 H16.4 Q17.4 6.3 17.4 7.4 V12.6 Q17.4 13.6 16.4 13.6 H14.6" stroke="#1b74b5" stroke-width="1.05" fill="none" stroke-linecap="round" stroke-linejoin="round" /><path d="M4.6 10.4 H14.6 V17.6 H4.6 Z M6.8 12.6 H12.4 M6.8 14.6 H11" stroke="#1b74b5" stroke-width="1" fill="none" stroke-linecap="round" stroke-linejoin="round" /><path d="M4 8.4 H5" stroke="#1b74b5" stroke-width="1.1" fill="none" stroke-linecap="round" stroke-linejoin="round" /></svg>
<svg class="a" style="left:811.5px;top:495.2px;" width="9" height="8.2" viewBox="0 0 9 8.2" fill="none"><path d="M1.4 1.5 H7.6 L4.5 6.6 Z" stroke="#1b74b5" stroke-width="1.05" stroke-linejoin="round" fill="none"/></svg>
<svg class="a" style="left:839px;top:488px;" width="20" height="22" viewBox="0 0 20 22" fill="none"><path d="M9.5 3.4 V10.6 M6.9 5.8 L9.5 3.2 L12.1 5.8" stroke="#1b74b5" stroke-width="1.15" fill="none" stroke-linecap="round" stroke-linejoin="round" /><path d="M6 8.2 H4.4 Q3.4 8.2 3.4 9.2 V17.6 Q3.4 18.6 4.4 18.6 H14.6 Q15.6 18.6 15.6 17.6 V9.2 Q15.6 8.2 14.6 8.2 H13" stroke="#1b74b5" stroke-width="1.15" fill="none" stroke-linecap="round" stroke-linejoin="round" /></svg>
<svg class="a" style="left:859.5px;top:495.2px;" width="9" height="8.2" viewBox="0 0 9 8.2" fill="none"><path d="M1.4 1.5 H7.6 L4.5 6.6 Z" stroke="#1b74b5" stroke-width="1.05" stroke-linejoin="round" fill="none"/></svg>
<svg class="a" style="left:1504px;top:488px;" width="22" height="22" viewBox="0 0 22 22" fill="none"><path d="M3.6 3.8 H18.2 Q18.4 8.6 12.4 10.4 V16.2 L10.6 18 H9.6 V10.4 Q3.4 8.6 3.6 3.8 Z" stroke="#1b74b5" stroke-width="1.15" fill="none" stroke-linecap="round" stroke-linejoin="round" /></svg>
<svg class="a" style="left:1542.5px;top:495.4px;" width="9" height="8.2" viewBox="0 0 9 8.2" fill="none"><path d="M1.4 1.5 H7.6 L4.5 6.6 Z" stroke="#1b74b5" stroke-width="1.05" stroke-linejoin="round" fill="none"/></svg>
<svg class="a" style="left:344px;top:525px;" width="20" height="20" viewBox="0 0 20 20" fill="none"><rect x="2.6" y="2.8" width="15" height="14.6" rx="1.2" stroke="#555" stroke-width="1.2"/><path d="M5 7.5 H11.6 M5 12.5 H7.8 M10.6 12.5 H15" stroke="#555" stroke-width="1" fill="none" stroke-linecap="round" stroke-linejoin="round" /><circle cx="13.2" cy="7.5" r="1.5" stroke="#555" stroke-width="1"/><circle cx="9.2" cy="12.5" r="1.5" stroke="#555" stroke-width="1"/></svg>
<svg class="a" style="left:639.6px;top:531.3px;" width="9" height="8.2" viewBox="0 0 9 8.2" fill="none"><path d="M1.4 1.5 H7.6 L4.5 6.6 Z" stroke="#555" stroke-width="1.05" stroke-linejoin="round" fill="none"/></svg>
<svg class="a" style="left:889.5px;top:531.3px;" width="9" height="8.2" viewBox="0 0 9 8.2" fill="none"><path d="M1.4 1.5 H7.6 L4.5 6.6 Z" stroke="#555" stroke-width="1.05" stroke-linejoin="round" fill="none"/></svg>
<svg class="a" style="left:1569.4px;top:531.3px;" width="9" height="8.2" viewBox="0 0 9 8.2" fill="none"><path d="M1.4 1.5 H7.6 L4.5 6.6 Z" stroke="#555" stroke-width="1.05" stroke-linejoin="round" fill="none"/></svg>
<svg class="a" style="left:345px;top:560px;" width="20" height="8" viewBox="0 0 20 8" fill="none"><circle cx="3.4" cy="3.9" r="1.8" stroke="#1b74b5" stroke-width="1.15"/><circle cx="9.2" cy="3.9" r="1.8" stroke="#1b74b5" stroke-width="1.15"/><circle cx="15" cy="3.9" r="1.8" stroke="#1b74b5" stroke-width="1.15"/></svg>
<svg class="a" style="left:645px;top:556px;" width="8" height="16" viewBox="0 0 8 16" fill="none"><circle cx="4" cy="3" r="1.5" stroke="#1b74b5" stroke-width="1"/><circle cx="4" cy="8" r="1.5" stroke="#1b74b5" stroke-width="1"/><circle cx="4" cy="13" r="1.5" stroke="#1b74b5" stroke-width="1"/></svg>
<svg class="a" style="left:345px;top:585px;" width="20" height="8" viewBox="0 0 20 8" fill="none"><circle cx="3.4" cy="3.9" r="1.8" stroke="#1b74b5" stroke-width="1.15"/><circle cx="9.2" cy="3.9" r="1.8" stroke="#1b74b5" stroke-width="1.15"/><circle cx="15" cy="3.9" r="1.8" stroke="#1b74b5" stroke-width="1.15"/></svg>
<svg class="a" style="left:645px;top:581px;" width="8" height="16" viewBox="0 0 8 16" fill="none"><circle cx="4" cy="3" r="1.5" stroke="#1b74b5" stroke-width="1"/><circle cx="4" cy="8" r="1.5" stroke="#1b74b5" stroke-width="1"/><circle cx="4" cy="13" r="1.5" stroke="#1b74b5" stroke-width="1"/></svg>
<svg class="a" style="left:345px;top:610px;" width="20" height="8" viewBox="0 0 20 8" fill="none"><circle cx="3.4" cy="3.9" r="1.8" stroke="#1b74b5" stroke-width="1.15"/><circle cx="9.2" cy="3.9" r="1.8" stroke="#1b74b5" stroke-width="1.15"/><circle cx="15" cy="3.9" r="1.8" stroke="#1b74b5" stroke-width="1.15"/></svg>
<svg class="a" style="left:645px;top:606px;" width="8" height="16" viewBox="0 0 8 16" fill="none"><circle cx="4" cy="3" r="1.5" stroke="#1b74b5" stroke-width="1"/><circle cx="4" cy="8" r="1.5" stroke="#1b74b5" stroke-width="1"/><circle cx="4" cy="13" r="1.5" stroke="#1b74b5" stroke-width="1"/></svg>
<svg class="a" style="left:642px;top:708px;" width="22" height="22" viewBox="0 0 22 22" fill="none"><path d="M9.4 3.5 L3.4 9 L9.4 14.5 M3.6 9 H11.4 Q18 9 18 14.6 Q18 17.6 15.6 19.2" stroke="#9b9b9b" stroke-width="2" fill="none" stroke-linecap="round" stroke-linejoin="round" stroke-linecap="butt"/></svg>
<svg class="a" style="left:678px;top:708px;" width="22" height="22" viewBox="0 0 22 22" fill="none"><path d="M12.6 3.5 L18.6 9 L12.6 14.5 M18.4 9 H10.6 Q4 9 4 14.6 Q4 17.6 6.4 19.2" stroke="#9b9b9b" stroke-width="2" fill="none" stroke-linecap="round" stroke-linejoin="round" /></svg>
<span class="t" style="left:724.0px;top:708.2px;height:24px;line-height:24px;font-size:19.5px;font-weight:700;color:#1b74b5;">B</span>
<span class="t" style="left:759.6px;top:707.6px;height:24px;line-height:24px;font-size:21px;font-weight:400;color:#1b74b5;font-family:'Liberation Serif',serif;font-style:italic;">I</span>
<svg class="a" style="left:790px;top:710px;" width="16" height="20" viewBox="0 0 16 20" fill="none"><path d="M3.8 3.2 V9 Q3.8 13 8 13 Q12.2 13 12.2 9 V3.2" stroke="#1b74b5" stroke-width="1.8" fill="none" stroke-linecap="round" stroke-linejoin="round" /><rect x="2.9" y="15.2" width="10.3" height="1.8" fill="#1b74b5"/></svg>
<svg class="a" style="left:822px;top:710px;" width="20" height="20" viewBox="0 0 20 20" fill="none"><path d="M14.6 6 Q14 3.9 10.4 3.9 Q6.6 3.9 6.6 6.6 Q6.6 8.4 9 9.4 M11.8 10.4 Q14.8 11.4 14.8 13.4 Q14.8 16.2 10.6 16.2 Q6.6 16.2 6 13.8" stroke="#1b74b5" stroke-width="1.7" fill="none" stroke-linecap="round" stroke-linejoin="round" /><rect x="2" y="8.9" width="16" height="1.6" fill="#1b74b5"/></svg>
<svg class="a" style="left:863px;top:708.85px;" width="22" height="22" viewBox="-11 -11 22 22" fill="none"><g transform="rotate(-45)" stroke="#1b74b5" stroke-width="1.8" fill="none" stroke-linecap="round"><path d="M 5 2.7 H 7.6 A 2.7 2.7 0 0 0 7.6 -2.7 H 2 A 2.7 2.7 0 0 0 -0.4 1.3"/><path d="M 5 2.7 H 7.6 A 2.7 2.7 0 0 0 7.6 -2.7 H 2 A 2.7 2.7 0 0 0 -0.4 1.3" transform="rotate(180)"/></g></svg>
<svg class="a" style="left:908px;top:712px;" width="16" height="16" viewBox="0 0 16 16" fill="none"><path d="M0 0 H6.1 L3.7 2.4 L6.1 4.8 L4.8 6.1 L2.4 3.7 L0 6.1 Z" fill="#1b74b5" transform="translate(0 0)"/><path d="M0 0 H6.1 L3.7 2.4 L6.1 4.8 L4.8 6.1 L2.4 3.7 L0 6.1 Z" fill="#1b74b5" transform="translate(16 0) scale(-1 1)"/><path d="M0 0 H6.1 L3.7 2.4 L6.1 4.8 L4.8 6.1 L2.4 3.7 L0 6.1 Z" fill="#1b74b5" transform="translate(0 15.8) scale(1 -1)"/><path d="M0 0 H6.1 L3.7 2.4 L6.1 4.8 L4.8 6.1 L2.4 3.7 L0 6.1 Z" fill="#1b74b5" transform="translate(16 15.8) scale(-1 -1)"/></svg>
<svg class="a" style="left:748.9px;top:750.2px;" width="12" height="8" viewBox="0 0 12 8" fill="none"><path d="M1.4 1.4 L6 5.8 L10.6 1.4" stroke="#1b74b5" stroke-width="1.7" fill="none" stroke-linecap="round" stroke-linejoin="round" /></svg>
<svg class="a" style="left:882.8px;top:750.2px;" width="12" height="8" viewBox="0 0 12 8" fill="none"><path d="M1.4 1.4 L6 5.8 L10.6 1.4" stroke="#1b74b5" stroke-width="1.7" fill="none" stroke-linecap="round" stroke-linejoin="round" /></svg>
<svg class="a" style="left:1017px;top:750.2px;" width="12" height="8" viewBox="0 0 12 8" fill="none"><path d="M1.4 1.4 L6 5.8 L10.6 1.4" stroke="#1b74b5" stroke-width="1.7" fill="none" stroke-linecap="round" stroke-linejoin="round" /></svg>
<span class="t" style="left:1047.0px;top:743.0px;height:18px;line-height:18px;font-size:14.5px;font-weight:700;color:#1b74b5;">A</span>
<div class="a" style="left:1043px;top:760px;width:18px;height:2.8px;background:#000"></div>
<svg class="a" style="left:1070.8px;top:750.2px;" width="12" height="8" viewBox="0 0 12 8" fill="none"><path d="M1.4 1.4 L6 5.8 L10.6 1.4" stroke="#1b74b5" stroke-width="1.7" fill="none" stroke-linecap="round" stroke-linejoin="round" /></svg>
<svg class="a" style="left:1093px;top:744px;" width="20" height="20" viewBox="0 0 20 20" fill="none"><path d="M3.2 13.6 L9.6 6.6 L13.6 10.6 L7.6 15.6 L3.8 15.6 Z" fill="#1b74b5"/><path d="M10.6 5.6 L12.6 3.4 Q13.6 2.6 14.6 3.5 L16.6 5.6 Q17.4 6.6 16.6 7.6 L14.6 9.6 Z" fill="#1b74b5"/></svg>
<div class="a" style="left:1094px;top:760px;width:18px;height:2.8px;background:#000"></div>
<svg class="a" style="left:1122px;top:750.2px;" width="12" height="8" viewBox="0 0 12 8" fill="none"><path d="M1.4 1.4 L6 5.8 L10.6 1.4" stroke="#1b74b5" stroke-width="1.7" fill="none" stroke-linecap="round" stroke-linejoin="round" /></svg>
<div class="a" style="left:1154.3px;top:747.2px;width:15.8px;height:1.6px;background:#1b74b5"></div>
<div class="a" style="left:1154.3px;top:751.2px;width:9.6px;height:1.6px;background:#1b74b5"></div>
<div class="a" style="left:1154.3px;top:755.2px;width:15.8px;height:1.6px;background:#1b74b5"></div>
<div class="a" style="left:1154.3px;top:759.2px;width:9.6px;height:1.6px;background:#1b74b5"></div>
<div class="a" style="left:1188px;top:747.2px;width:15.8px;height:1.6px;background:#1b74b5"></div>
<div class="a" style="left:1191.2px;top:751.2px;width:9.4px;height:1.6px;background:#1b74b5"></div>
<div class="a" style="left:1188px;top:755.2px;width:15.8px;height:1.6px;background:#1b74b5"></div>
<div class="a" style="left:1191.2px;top:759.2px;width:9.4px;height:1.6px;background:#1b74b5"></div>
<div class="a" style="left:1221.8px;top:747.2px;width:15.8px;height:1.6px;background:#1b74b5"></div>
<div class="a" style="left:1228px;top:751.2px;width:9.6px;height:1.6px;background:#1b74b5"></div>
<div class="a" style="left:1221.8px;top:755.2px;width:15.8px;height:1.6px;background:#1b74b5"></div>
<div class="a" style="left:1228px;top:759.2px;width:9.6px;height:1.6px;background:#1b74b5"></div>
<div class="a" style="left:1255.9px;top:747.2px;width:16px;height:1.6px;background:#1b74b5"></div>
<div class="a" style="left:1255.9px;top:751.2px;width:16px;height:1.6px;background:#1b74b5"></div>
<div class="a" style="left:1255.9px;top:755.2px;width:16px;height:1.6px;background:#1b74b5"></div>
<div class="a" style="left:1255.9px;top:759.2px;width:16px;height:1.6px;background:#1b74b5"></div>
<svg class="a" style="left:1302px;top:996px;" width="18" height="18" viewBox="0 0 18 18" fill="none"><g transform="rotate(-7 9 9)"><rect x="1.2" y="1.2" width="15.6" height="15.6" rx="4.6" fill="#43526a"/><path d="M7.4 4.6 H13.2 V10.6 H10.8 V13.2 H4.8 V7.2 H7.4 Z" fill="#fff"/><rect x="7.6" y="7.4" width="3" height="3" fill="#43526a"/></g></svg>
<svg class="a" style="left:1544px;top:1064px;" width="24" height="16" viewBox="0 0 24 16" fill="none"><path d="M2.4 3.2 L12 12 L21.6 3.2" stroke="#1b74b5" stroke-width="2.2" fill="none" stroke-linecap="round" stroke-linejoin="round" /></svg>
</body></html>
